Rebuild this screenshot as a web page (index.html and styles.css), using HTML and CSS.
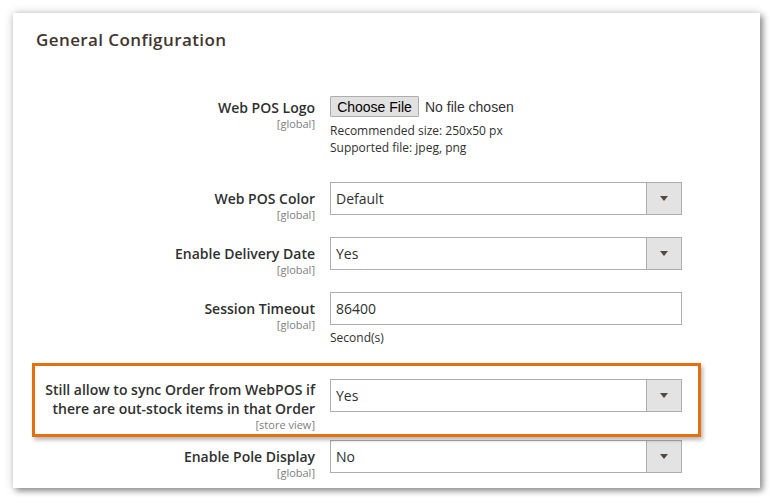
FILE: index.html
```html
<!DOCTYPE html>
<html>
<head>
<meta charset="utf-8">
<link rel="stylesheet" href="styles.css">
</head>
<body>
<section class="card">
  <h2 class="title">General Configuration</h2>

  <div class="row row-logo">
    <div class="label label-tight">
      <span class="label-text">Web POS Logo</span>
      <span class="scope">[global]</span>
    </div>
    <div class="control">
      <div class="file">
        <button class="file-btn" type="button">Choose File</button>
        <span class="file-name">No file chosen</span>
      </div>
      <div class="note note-logo">Recommended size: 250x50 px<br>Supported file: jpeg, png</div>
    </div>
  </div>

  <div class="row row-color">
    <div class="label">
      <span class="label-text">Web POS Color</span>
      <span class="scope">[global]</span>
    </div>
    <div class="control">
      <div class="select"><span class="select-value">Default</span><span class="select-arrow"></span></div>
    </div>
  </div>

  <div class="row row-gap">
    <div class="label">
      <span class="label-text">Enable Delivery Date</span>
      <span class="scope">[global]</span>
    </div>
    <div class="control">
      <div class="select"><span class="select-value">Yes</span><span class="select-arrow"></span></div>
    </div>
  </div>

  <div class="row row-gap">
    <div class="label">
      <span class="label-text">Session Timeout</span>
      <span class="scope">[global]</span>
    </div>
    <div class="control">
      <div class="input">86400</div>
      <div class="note note-input">Second(s)</div>
    </div>
  </div>

  <div class="row row-sync">
    <div class="label label-multi">
      <span class="label-text">Still allow to sync Order from WebPOS if<br>there are out-stock items in that Order</span>
      <span class="scope">[store view]</span>
    </div>
    <div class="control">
      <div class="select"><span class="select-value">Yes</span><span class="select-arrow"></span></div>
    </div>
  </div>

  <div class="row row-pole">
    <div class="label">
      <span class="label-text">Enable Pole Display</span>
      <span class="scope">[global]</span>
    </div>
    <div class="control">
      <div class="select"><span class="select-value">No</span><span class="select-arrow"></span></div>
    </div>
  </div>
</section>
</body>
</html>
```

FILE: styles.css
```css
html, body {
  margin: 0;
  padding: 0;
  background: #ffffff;
}

body {
  width: 774px;
  height: 502px;
  overflow: hidden;
  font-family: "Open Sans", "DejaVu Sans", sans-serif;
  color: #303030;
}

.card {
  box-sizing: border-box;
  margin: 13px 0 0 13px;
  width: 747px;
  height: 475px;
  background: #ffffff;
  box-shadow: 0 0 9px rgba(0, 0, 0, 0.2), 3px 3px 6px rgba(0, 0, 0, 0.38);
  padding-top: 15px;
}

.title {
  margin: 0 0 0 23px;
  font-size: 17px;
  line-height: 24px;
  font-weight: 600;
  color: #41362f;
  letter-spacing: 0.4px;
}

.row {
  display: grid;
  width: 669px;
  grid-template-columns: 302px 352px;
  column-gap: 15px;
  align-items: start;
}

.row-logo { margin-top: 44px; }
.row-color { margin-top: 26px; }
.row-gap { margin-top: 16px; }
.row-sync { margin-top: 33px; position: relative; }
.row-pole { margin-top: 9px; }

.label {
  display: flex;
  flex-direction: column;
  align-items: flex-end;
  text-align: right;
  padding-top: 7px;
}

.label-tight { padding-top: 2px; }
.label-multi { padding-top: 1px; }

.label-text {
  font-size: 14px;
  line-height: 19px;
  font-weight: 600;
  color: #303030;
}

.scope {
  font-size: 11px;
  line-height: 13px;
  color: #808080;
}

.control {
  display: flex;
  flex-direction: column;
}

.file {
  display: flex;
  align-items: center;
  gap: 6px;
  height: 21px;
}

.file-btn {
  box-sizing: border-box;
  height: 21px;
  width: 89px;
  padding: 0;
  margin: 0;
  border: 1px solid #adadad;
  border-radius: 1px;
  background: #e1e1e1;
  font-family: "Liberation Sans", Arial, sans-serif;
  font-size: 14px;
  color: #000000;
}

.file-name {
  font-family: "Liberation Sans", Arial, sans-serif;
  font-size: 14px;
  color: #333333;
}

.note {
  font-size: 12px;
  line-height: 17px;
  color: #303030;
}

.note-logo { margin-top: 5px; }
.note-input { margin-top: 4px; }

.select,
.input {
  box-sizing: border-box;
  height: 33px;
  border: 1px solid #adadad;
  background: #ffffff;
  display: flex;
  align-items: center;
  font-size: 14px;
  color: #303030;
}

.input {
  padding-left: 5px;
}

.select-value {
  flex: 1;
  padding-left: 5px;
}

.select-arrow {
  width: 34px;
  height: 100%;
  background: #e3e3e3;
  border-left: 1px solid #adadad;
  display: flex;
  align-items: center;
  justify-content: center;
}

.select-arrow::after {
  content: "";
  width: 0;
  height: 0;
  border-left: 4px solid transparent;
  border-right: 4px solid transparent;
  border-top: 5px solid #514943;
}

.row-sync::before {
  content: "";
  position: absolute;
  left: 19px;
  right: -19px;
  top: -16px;
  height: 74px;
  box-sizing: border-box;
  border: 3px solid #e5700f;
  box-shadow: 2px 3px 4px rgba(0, 0, 0, 0.28);
  pointer-events: none;
}
```
